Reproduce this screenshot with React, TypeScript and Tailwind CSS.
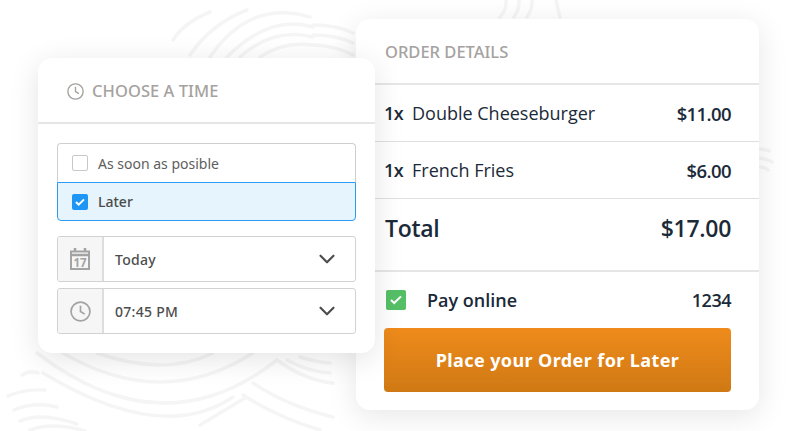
import React from "react";
import { ChevronDown } from "lucide-react";

const sans = "font-['Noto_Sans',sans-serif]";
const cardText = "font-['Open_Sans',sans-serif]";

// start, middle, end of each fingerprint line behind the cards
const swirlLines = [
  // top, above the time card
  [173, 40, 188, 24, 210, 12],
  [190, 55, 215, 28, 247, 10],
  [210, 57, 255, 18, 310, 17],
  [227, 57, 270, 28, 313, 27],
  [240, 57, 275, 37, 313, 37],
  [260, 57, 285, 46, 313, 45],
  [313, 25, 335, 27, 353, 33],
  [313, 35, 335, 37, 353, 43],
  [313, 45, 335, 48, 353, 55],
  // top, above the order card
  [506, 0, 505, 9, 500, 17],
  [519, 0, 518, 9, 514, 17],
  [532, 0, 531, 9, 527, 17],
  [556, 0, 558, 9, 560, 17],
  // under the time card
  [37, 353, 160, 403, 277, 360],
  [63, 353, 160, 382, 253, 353],
  [97, 353, 160, 365, 213, 353],
  [43, 373, 150, 415, 233, 397],
  [277, 360, 305, 376, 333, 383],
  [287, 360, 308, 369, 330, 373],
  [300, 357, 315, 361, 330, 363],
  [253, 383, 290, 403, 333, 417],
  [243, 395, 280, 415, 320, 430],
  [8, 396, 25, 391, 45, 390],
  [14, 410, 35, 405, 57, 407],
  [20, 421, 45, 417, 77, 424],
  [22, 375, 30, 372, 38, 373],
  [30, 430, 55, 426, 85, 431],
  [200, 425, 225, 410, 245, 398],
  // right of the order card
  [760, 149, 766, 150, 769, 151],
  [760, 158, 768, 160, 772, 162],
  [760, 167, 765, 168, 768, 170],
];

const Background = () => (
  <svg className="absolute inset-0" width="797" height="431" viewBox="0 0 797 431" fill="none" stroke="#f5f5f6" strokeWidth="3.5" strokeLinecap="round">
    {swirlLines.map(([x1, y1, xm, ym, x2, y2], i) => (
      <path key={i} d={`M${x1} ${y1}Q${2 * xm - (x1 + x2) / 2} ${2 * ym - (y1 + y2) / 2} ${x2} ${y2}`} />
    ))}
  </svg>
);

const Checkbox = ({ checked }: { checked?: boolean }) =>
  checked ? (
    <span className="flex h-4 w-4 items-center justify-center rounded-[2px] bg-[#1e96f5]">
      <svg width="10" height="8" viewBox="0 0 10 8" fill="none" stroke="#fff" strokeWidth="2">
        <path d="M1 4l2.7 2.6L9 1.4" />
      </svg>
    </span>
  ) : (
    <span className="h-4 w-4 rounded-[2px] border border-[#c9c9c9] bg-white" />
  );

const CalendarIcon = () => (
  <svg width="20" height="22" viewBox="0 0 20 22" fill="none" stroke="#a3a3a3">
    <rect x="1" y="3.5" width="18" height="17.5" strokeWidth="2" />
    <path d="M0 7h20" strokeWidth="2.5" />
    <path d="M5 0v4M15 0v4" strokeWidth="2.5" />
    <text x="10" y="19" textAnchor="middle" fontSize="11.5" fontWeight="700" fill="#a3a3a3" stroke="none" fontFamily="Noto Sans, sans-serif">
      17
    </text>
  </svg>
);

const ClockIcon = ({ size, stroke }: { size: number; stroke: string }) => (
  <svg width={size} height={size} viewBox="0 0 20 20" fill="none" stroke={stroke} strokeWidth="1.6">
    <circle cx="10" cy="10" r="9" />
    <path d="M10 4.5V10l4 2.5" />
  </svg>
);

const SelectRow = ({ icon, label }: { icon: React.ReactNode; label: string }) => (
  <div className="flex h-[46px] overflow-hidden rounded-[3px] border border-[#d2d2d2] bg-white">
    <div className="flex w-[46px] items-center justify-center border-r-2 border-[#dedede] bg-[#f6f6f6]">{icon}</div>
    <div className="flex flex-1 items-center justify-between pl-[11px] pr-[15px]">
      <span className="text-[14px] font-medium tracking-[0.3px] text-[#4d4d4d]">{label}</span>
      <ChevronDown size={26} strokeWidth={2} className="text-[#4d4d4d]" />
    </div>
  </div>
);

const OrderRow = ({ name, price }: { name: string; price: string }) => (
  <div className={`flex h-[57px] items-center justify-between border-b border-[#dfdfdf] px-7 pt-px text-[18px] text-[#1b2a38] ${cardText}`}>
    <div className="flex items-center">
      <span className="w-[28px] font-semibold tracking-[-0.5px]">1x</span>
      <span>{name}</span>
    </div>
    <span className="text-[18.5px] font-semibold tracking-[-0.6px]">{price}</span>
  </div>
);

export default function App() {
  return (
    <div className={`relative flex h-[431px] w-[797px] items-start overflow-hidden bg-white ${sans}`}>
      <Background />

      {/* Choose a time */}
      <div className="relative z-10 ml-[38px] mt-[58px] h-[295px] w-[337px] shrink-0 rounded-[14px] bg-white shadow-[0_6px_30px_rgba(0,0,0,0.11)]">
        <div className="flex h-[66px] items-center gap-2 border-b-2 border-[#e6e6e6] pl-[29px] pt-[2px]">
          <ClockIcon size={17} stroke="#a5a29f" />
          <span className="text-[16.5px] font-medium tracking-[0.05px] text-[#a5a29f]">CHOOSE A TIME</span>
        </div>
        <div className="px-[19px] pt-[19px]">
          <div className="overflow-hidden rounded-t-[4px] border border-b-0 border-[#cfcfcf]">
            <div className="flex h-[38px] items-center gap-[10px] pl-[14px] text-[14px] text-[#5e5e5e]">
              <Checkbox />
              As soon as posible
            </div>
          </div>
          <div className="flex h-[39px] items-center gap-[10px] rounded-b-[4px] border border-[#2b9cf3] bg-[#e6f4fd] pl-[14px] text-[14px] font-medium text-[#4a4a4a]">
            <Checkbox checked />
            Later
          </div>
          <div className="mt-[15px] flex flex-col gap-[6px]">
            <SelectRow icon={<CalendarIcon />} label="Today" />
            <SelectRow icon={<ClockIcon size={21} stroke="#a3a3a3" />} label="07:45 PM" />
          </div>
        </div>
      </div>

      {/* Order details */}
      <div className="relative -ml-[19px] mt-[19px] h-[391px] w-[403px] shrink-0 rounded-[14px] bg-white shadow-[0_6px_30px_rgba(0,0,0,0.1)]">
        <div className="flex h-[66px] items-center border-b-2 border-[#e6e6e6] pl-[29px] pt-[2px] text-[16.5px] font-medium text-[#a5a29f]">
          ORDER DETAILS
        </div>
        <OrderRow name="Double Cheeseburger" price="$11.00" />
        <OrderRow name="French Fries" price="$6.00" />
        <div className={`flex h-[73px] items-start justify-between border-b-2 border-[#e6e6e6] px-7 pt-[11px] text-[23px] font-semibold leading-[36px] tracking-[-0.3px] text-[#1b2a38] ${cardText}`}>
          <span className="pl-px">Total</span>
          <span>$17.00</span>
        </div>
        <div className={`flex h-[56px] items-center justify-between pl-[30px] pr-7 text-[18px] font-semibold text-[#1b2a38] ${cardText}`}>
          <div className="flex items-center gap-[21px]">
            <span className="flex h-5 w-5 items-center justify-center rounded-[2px] bg-[#55bf66]">
              <svg width="12" height="10" viewBox="0 0 12 10" fill="none" stroke="#fff" strokeWidth="2">
                <path d="M1 5l3.2 3L11 1.4" />
              </svg>
            </span>
            Pay online
          </div>
          <span className="tracking-[-0.5px]">1234</span>
        </div>
        <button className="ml-7 flex h-16 w-[347px] items-center justify-center rounded-[4px] bg-gradient-to-b from-[#ef8b1b] to-[#cf7914] text-[18px] font-bold tracking-[0.4px] text-white">
          Place your Order for Later
        </button>
      </div>
    </div>
  );
}
